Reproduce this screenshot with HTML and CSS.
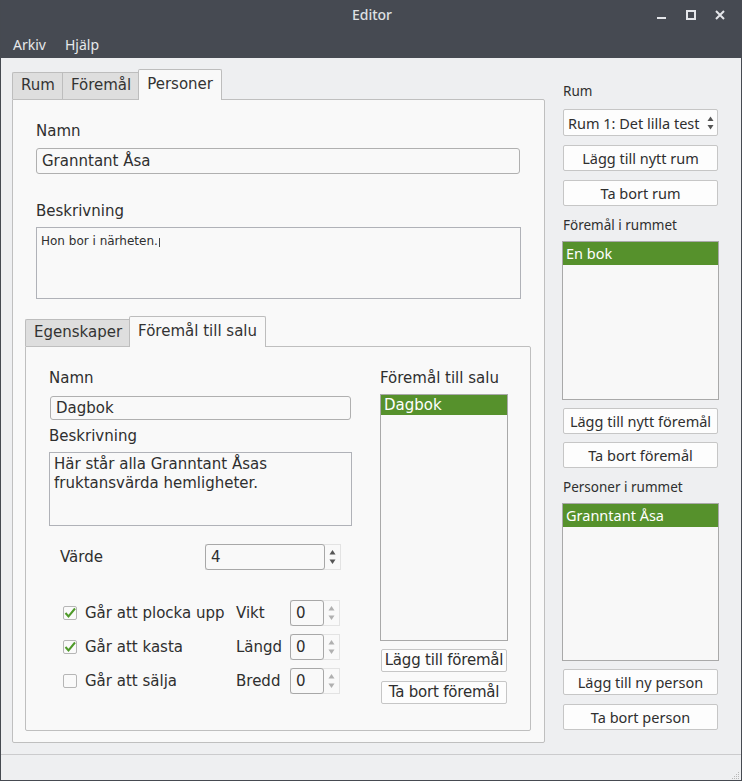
FILE: index.html
```html
<!DOCTYPE html>
<html lang="sv">
<head>
<meta charset="utf-8">
<title>Editor</title>
<link rel="stylesheet" href="styles.css">
</head>
<body>
<div class="window">
  <div class="titlebar">
    <span class="title">Editor</span>
    <div class="wincontrols">
      <svg class="wc" width="10" height="10" viewBox="0 0 10 10"><rect x="0" y="7" width="9" height="2" fill="#e4e6ea"/></svg>
      <svg class="wc" width="10" height="10" viewBox="0 0 10 10"><rect x="1" y="1" width="8" height="8" fill="none" stroke="#e4e6ea" stroke-width="2"/></svg>
      <svg class="wc" width="10" height="10" viewBox="0 0 10 10"><path d="M1 1 L9 9 M9 1 L1 9" stroke="#e4e6ea" stroke-width="2"/></svg>
    </div>
  </div>
  <div class="menubar">
    <span class="menuitem">Arkiv</span>
    <span class="menuitem">Hjälp</span>
  </div>
  <div class="content">
    <div class="tabwidget main-tabs">
      <div class="tabbar">
        <div class="tab">Rum</div>
        <div class="tab">Föremål</div>
        <div class="tab active">Personer</div>
      </div>
      <div class="pane outer-pane">
        <div class="person-form">
          <div class="lbl lbl-first">Namn</div>
          <div class="lineedit wide">Granntant Åsa</div>
          <div class="lbl lbl-desc">Beskrivning</div>
          <div class="textarea small-text">Hon bor i närheten.<span class="caret"></span></div>
        </div>
        <div class="tabwidget inner-tabs">
          <div class="tabbar">
            <div class="tab">Egenskaper</div>
            <div class="tab active">Föremål till salu</div>
          </div>
          <div class="pane inner-pane">
            <div class="item-form">
              <div class="lbl lbl-first">Namn</div>
              <div class="lineedit item-name">Dagbok</div>
              <div class="lbl lbl-desc2">Beskrivning</div>
              <div class="textarea item-desc">Här står alla Granntant Åsas fruktansvärda hemligheter.</div>
              <div class="value-row">
                <span class="value-label">Värde</span>
                <div class="spinbox big-spin">
                  <div class="spin-field">4</div>
                  <div class="spin-arrows">
                    <svg width="7" height="18" viewBox="0 0 7 18" fill="#555"><path d="M3.5 2 L6.5 6.5 L0.5 6.5 Z"/><path d="M0.5 11.5 L6.5 11.5 L3.5 16 Z"/></svg>
                  </div>
                </div>
              </div>
              <div class="check-rows">
                <div class="check-row">
                  <span class="checkbox checked"><svg width="14" height="14" viewBox="0 0 14 14"><path d="M2.5 7 L5.5 10.5 L12 2.5" fill="none" stroke="#4f9a2a" stroke-width="2"/></svg></span>
                  <span class="check-text">Går att plocka upp</span>
                  <span class="dim-label">Vikt</span>
                  <div class="spinbox small-spin">
                    <div class="spin-field">0</div>
                    <div class="spin-arrows"><svg width="7" height="18" viewBox="0 0 7 18" fill="#b0b0b0"><path d="M3.5 2 L6.5 6.5 L0.5 6.5 Z"/><path d="M0.5 11.5 L6.5 11.5 L3.5 16 Z"/></svg></div>
                  </div>
                </div>
                <div class="check-row">
                  <span class="checkbox checked"><svg width="14" height="14" viewBox="0 0 14 14"><path d="M2.5 7 L5.5 10.5 L12 2.5" fill="none" stroke="#4f9a2a" stroke-width="2"/></svg></span>
                  <span class="check-text">Går att kasta</span>
                  <span class="dim-label">Längd</span>
                  <div class="spinbox small-spin">
                    <div class="spin-field">0</div>
                    <div class="spin-arrows"><svg width="7" height="18" viewBox="0 0 7 18" fill="#b0b0b0"><path d="M3.5 2 L6.5 6.5 L0.5 6.5 Z"/><path d="M0.5 11.5 L6.5 11.5 L3.5 16 Z"/></svg></div>
                  </div>
                </div>
                <div class="check-row">
                  <span class="checkbox"></span>
                  <span class="check-text">Går att sälja</span>
                  <span class="dim-label">Bredd</span>
                  <div class="spinbox small-spin">
                    <div class="spin-field">0</div>
                    <div class="spin-arrows"><svg width="7" height="18" viewBox="0 0 7 18" fill="#b0b0b0"><path d="M3.5 2 L6.5 6.5 L0.5 6.5 Z"/><path d="M0.5 11.5 L6.5 11.5 L3.5 16 Z"/></svg></div>
                  </div>
                </div>
              </div>
            </div>
            <div class="sale-column">
              <div class="lbl lbl-first">Föremål till salu</div>
              <div class="listbox sale-list">
                <div class="list-item">Dagbok</div>
              </div>
              <div class="btn sale-btn first">Lägg till föremål</div>
              <div class="btn sale-btn">Ta bort föremål</div>
            </div>
          </div>
        </div>
      </div>
    </div>
    <div class="sidepanel">
      <div class="side-lbl first">Rum</div>
      <div class="combo"><span class="combo-text">Rum 1: Det lilla test</span><svg class="combo-arrows" width="7" height="16" viewBox="0 0 7 16" fill="#555"><path d="M3.5 1.5 L6.5 6 L0.5 6 Z"/><path d="M0.5 10 L6.5 10 L3.5 14.5 Z"/></svg></div>
      <div class="btn side-btn">Lägg till nytt rum</div>
      <div class="btn side-btn">Ta bort rum</div>
      <div class="side-lbl">Föremål i rummet</div>
      <div class="listbox side-list list-a"><div class="list-item side-item">En bok</div></div>
      <div class="btn side-btn gap8">Lägg till nytt föremål</div>
      <div class="btn side-btn gap8">Ta bort föremål</div>
      <div class="side-lbl">Personer i rummet</div>
      <div class="listbox side-list list-b"><div class="list-item side-item">Granntant Åsa</div></div>
      <div class="btn side-btn gap8">Lägg till ny person</div>
      <div class="btn side-btn">Ta bort person</div>
    </div>
  </div>
  <div class="statusbar">
    <svg class="grip" width="10" height="10" viewBox="0 0 10 10" fill="#b8b8b8">
      <rect x="8" y="2" width="1" height="1"/><rect x="6" y="4" width="1" height="1"/><rect x="8" y="4" width="1" height="1"/>
      <rect x="4" y="6" width="1" height="1"/><rect x="6" y="6" width="1" height="1"/><rect x="8" y="6" width="1" height="1"/>
      <rect x="2" y="8" width="1" height="1"/><rect x="4" y="8" width="1" height="1"/><rect x="6" y="8" width="1" height="1"/><rect x="8" y="8" width="1" height="1"/>
    </svg>
  </div>
</div>
</body>
</html>
```
FILE: styles.css
```css
* { box-sizing: border-box; }
html, body { margin: 0; padding: 0; }
body {
  width: 742px;
  height: 781px;
  overflow: hidden;
  font-family: "DejaVu Sans", sans-serif;
  font-size: 15px;
  color: #2f2f2f;
  background: #eeeff1;
}
.window {
  width: 742px;
  height: 781px;
  display: flex;
  flex-direction: column;
  border-left: 1px solid #464a51;
  border-right: 1px solid #464a51;
  border-bottom: 1px solid #464a51;
  background: #eeeff1;
}
.titlebar {
  height: 30px;
  background: #464a52;
  position: relative;
  display: flex;
  align-items: center;
  justify-content: center;
  font-family: "Noto Sans", sans-serif;
  font-size: 14px;
  font-weight: 500;
  color: #dfe1e4;
  flex: none;
}
.title { position: relative; left: 1px; top: -1px; }
.wincontrols {
  position: absolute;
  right: 16px;
  top: 10px;
  display: flex;
  gap: 19px;
}
.wc { display: block; }
.menubar {
  height: 28px;
  background: #464a52;
  display: flex;
  align-items: center;
  padding-left: 12px;
  gap: 19px;
  font-family: "Noto Sans", sans-serif;
  font-size: 14px;
  color: #e6e8ea;
  flex: none;
}
.content {
  height: 696px;
  display: flex;
  padding-left: 11px;
  flex: none;
}
.statusbar {
  flex: 1;
  border-top: 1px solid #cbcbcd;
  position: relative;
}
.grip { position: absolute; right: 1px; bottom: 0; }

/* tabs */
.tabwidget { display: flex; flex-direction: column; }
.main-tabs { width: 533px; margin-top: 11px; }
.tabbar {
  height: 30px;
  display: flex;
  align-items: flex-end;
  position: relative;
  z-index: 1;
}
.tab {
  height: 27px;
  padding: 0 7px 0 8px;
  border: 1px solid #bdbdbd;
  border-bottom: none;
  border-right: none;
  background: #dedede;
  line-height: 25px;
  color: #333;
}
.tab:first-child { border-top-left-radius: 2px; }
.tab.active {
  height: 31px;
  margin-bottom: -1px;
  background: #f9f9f9;
  border-right: 1px solid #bdbdbd;
  border-radius: 2px 2px 0 0;
  line-height: 29px;
  padding: 0 8px;
}
.pane {
  border: 1px solid #bfbfbf;
  border-radius: 0 2px 2px 2px;
  background: #f9f9f9;
}
.outer-pane {
  height: 644px;
  padding: 0 13px 0 12px;
}
.person-form { padding: 0 11px 0 11px; }
.lbl { line-height: 18px; height: 18px; }
.lbl-first { margin-top: 22px; }
.lineedit {
  border: 1px solid #b0b0b0;
  border-radius: 3px;
  background: #f9f9f9;
  padding: 0 5px;
}
.wide { height: 26px; margin-top: 8px; line-height: 24px; }
.lbl-desc { margin-top: 28px; }
.textarea {
  border: 1px solid #b0b2b8;
  background: #f9f9f9;
}
.small-text {
  margin-top: 7px;
  height: 72px;
  font-size: 12px;
  padding: 5px 4px;
  line-height: 16px;
  width: 485px;
}
.caret {
  display: inline-block;
  width: 1px;
  height: 9px;
  background: #444;
  margin-left: 1px;
  vertical-align: -2px;
}
.inner-tabs { margin-top: 17px; }
.inner-pane {
  height: 385px;
  display: flex;
  padding-left: 23px;
}
.item-form { width: 303px; }
.item-name {
  margin-top: 9px;
  margin-left: 1px;
  width: 301px;
  height: 24px;
  line-height: 22px;
}
.lbl-desc2 { margin-top: 7px; }
.item-desc {
  margin-top: 7px;
  height: 74px;
  padding: 2px 4px;
  line-height: 19px;
}
.value-row {
  margin-top: 18px;
  display: flex;
  align-items: center;
  height: 26px;
}
.value-label { padding-left: 11px; width: 156px; }
.spinbox {
  display: flex;
  height: 26px;
  background: #efefef;
  border: 1px solid #e3e3e3;
}
.spin-field {
  flex: 1;
  background: #f9f9f9;
  border: 1px solid #a8a8a8;
  border-radius: 3px;
  margin: -1px 0 -1px -1px;
  padding-left: 5px;
  line-height: 24px;
}
.spin-arrows {
  width: 15px;
  display: flex;
  align-items: center;
  justify-content: center;
  background: #f9f9f9;
}
.spin-arrows svg { display: block; }
.big-spin { width: 136px; }
.check-rows {
  margin-top: 30px;
  display: flex;
  flex-direction: column;
  gap: 8px;
}
.check-row {
  display: flex;
  align-items: center;
  height: 26px;
}
.checkbox {
  width: 14px;
  height: 14px;
  margin-left: 14px;
  border: 1px solid #b6b6b6;
  border-radius: 2px;
  background: #fafafa;
  position: relative;
  flex: none;
}
.checkbox svg { position: absolute; left: -1px; top: -1px; }
.check-text { margin-left: 8px; width: 151px; white-space: nowrap; }
.dim-label { width: 54px; }
.small-spin { width: 50px; }
.sale-column { margin-left: 28px; width: 128px; }
.listbox {
  border: 1px solid #a9a9a9;
  background: #f8f8f8;
}
.sale-list { margin-top: 7px; height: 247px; }
.list-item {
  background: #56912c;
  color: #fff;
  height: 20px;
  line-height: 20px;
  padding-left: 3px;
}
.btn {
  border: 1px solid #c6c6c6;
  border-radius: 2px;
  background: #fdfdfd;
  text-align: center;
  white-space: nowrap;
}
.sale-btn {
  width: 126px;
  margin-left: 1px;
  height: 23px;
  line-height: 21px;
  margin-top: 9px;
  letter-spacing: -0.2px;
}
.sale-btn.first { margin-top: 8px; }

/* side panel */
.sidepanel {
  margin-left: 18px;
  width: 156px;
  font-family: "Noto Sans", sans-serif;
  font-size: 13.5px;
  display: flex;
  flex-direction: column;
}
.side-lbl { height: 18px; line-height: 18px; margin-top: 10px; }
.side-lbl.first { margin-top: 24px; }
.combo {
  margin-top: 9px;
  height: 27px;
  width: 155px;
  border: 1px solid #c6c6c6;
  border-radius: 2px;
  background: #fdfdfd;
  display: flex;
  align-items: center;
  padding-left: 4px;
  font-size: 14.5px;
}
.combo-text {
  width: 132px;
  overflow: hidden;
  white-space: nowrap;
}
.combo-arrows { display: block; margin-left: 7px; }
.side-btn {
  margin-top: 9px;
  width: 155px;
  height: 26px;
  line-height: 24px;
  font-size: 14.5px;
}
.side-btn.gap8 { margin-top: 8px; }
.side-list {
  margin-top: 7px;
  margin-left: -1px;
  width: 157px;
}
.list-a { height: 159px; }
.list-b { height: 158px; }
.side-item {
  height: 23px;
  line-height: 23px;
  font-size: 14.5px;
  padding-left: 3px;
}
```
